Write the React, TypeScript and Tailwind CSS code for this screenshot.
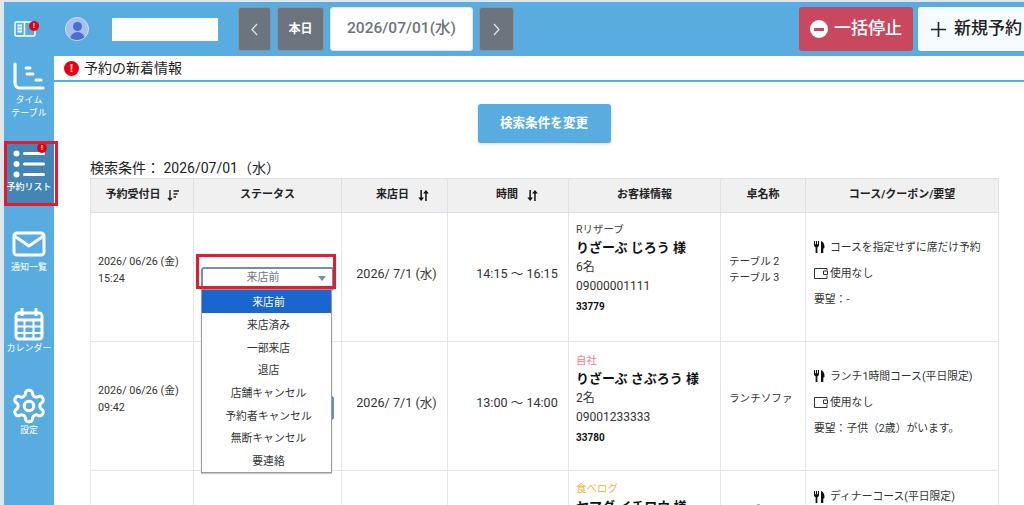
import React from "react";

const font = { fontFamily: 'Roboto, "Noto Sans CJK JP", sans-serif' };

function Badge({ className }: { className: string }) {
  return (
    <span className={"absolute flex items-center justify-center rounded-full bg-[#e60012] text-white font-bold leading-none " + className}>!</span>
  );
}

function NavItem({ label, children, className = "" }: { label: React.ReactNode; children: React.ReactNode; className?: string }) {
  return (
    <div className={"relative flex flex-col items-center text-white text-[9px] leading-[13px] " + className}>
      {children}
      <div className="text-center whitespace-nowrap">{label}</div>
    </div>
  );
}

function Fork() {
  return (
    <svg width="11" height="12" viewBox="0 0 11 12" className="shrink-0">
      <path d="M0 0v4C0 5.300 .8 6 1.600 6.300V12h1.800V6.300C4.200 6 5 5.300 5 4V0H4v3.200H3.100V0H1.900v3.200H1V0z" fill="#111" />
      <path d="M7 12V0c2 .5 3.500 2.500 3.500 6 0 1-.5 1.500-1.200 1.500V12z" fill="#111" />
    </svg>
  );
}

function Coupon() {
  return (
    <svg width="14" height="11" viewBox="0 0 14 11" className="shrink-0" fill="none" stroke="#333" strokeWidth="1">
      <path d="M13 2.500V.5H.5v10H13V7.500" />
      <path d="M13.500 3H9.500v3.500h4z" />
    </svg>
  );
}

function Arrows() {
  return (
    <svg width="11" height="11" viewBox="0 0 11 11">
      <path d="M2.400 0h1.500v7.500H6L3.150 11 .3 7.500h2.100z" fill="#111" />
      <path d="M7.200 11h1.500V3.500h2.100L7.950 0 5.100 3.500h2.100z" fill="#111" />
    </svg>
  );
}

const headCell = "border border-[#dee2e6] bg-[#f0f0f0] text-[11px] font-bold text-[#222] text-center align-middle h-[34px] p-0";
const cell = "border border-[#e4e4ee] align-middle p-0 text-[#333]";

function Customer({ source, sourceColor, name, count, tel, id, className = "" }: { source: string; sourceColor: string; name: string; count: string; tel: string; id: string; className?: string }) {
  return (
    <div className={"pl-[7px] text-[12px] leading-[19px] " + className}>
      <div className={"text-[10.500px] leading-[17px] " + sourceColor}>{source}</div>
      <div className="text-[13px] font-bold text-[#111] leading-[20px]">{name}</div>
      <div>{count}</div>
      <div>{tel}</div>
      <div className="text-[10px] font-bold text-[#111] leading-[21px]">{id}</div>
    </div>
  );
}

function Course({ course, want }: { course: string; want: string }) {
  return (
    <div className="pl-2 pb-[8px] text-[10.800px] text-[#333] flex flex-col gap-[11px] leading-[15px]">
      <div className="flex items-center gap-[5px] whitespace-nowrap"><Fork />{course}</div>
      <div className="flex items-center gap-[2px]"><Coupon />使用なし</div>
      <div>要望：{want}</div>
    </div>
  );
}

export default function App() {
  const options = ["来店済み", "一部来店", "退店", "店舗キャンセル", "予約者キャンセル", "無断キャンセル", "要連絡"];
  return (
    <div style={font} className="relative w-[1024px] h-[505px] overflow-hidden bg-[#dfe7ee] pl-[4px] pt-[2px] flex flex-col">
      <header className="h-[54px] shrink-0 bg-[#58ace0] flex items-center">
        <div className="relative w-[42px] shrink-0 flex justify-center">
          <svg width="22" height="16" viewBox="0 0 22 16" fill="none" stroke="#fff" strokeWidth="1.500" className="-ml-[1px]">
            <path d="M2.500 1h8v14h-8A1.500 1.500 0 0 1 1 13.500v-11A1.500 1.500 0 0 1 2.500 1zM10.500 1h9A1.500 1.500 0 0 1 21 2.500v11a1.500 1.500 0 0 1-1.500 1.500h-9" />
            <path d="M3.500 4.500h4.500M3.500 7.500h4.500M3.500 10.500h4.500" strokeWidth="1.800" />
          </svg>
          <Badge className="right-[7px] top-0 w-[10px] h-[10px] text-[7px]" />
        </div>
        <div className="ml-[19px] w-[24px] h-[24px] rounded-full bg-[#a8c0f0] border border-[#d0dcf4] overflow-hidden flex flex-col items-center shrink-0">
          <span className="w-[9px] h-[9px] rounded-full bg-[#4a6fd0] mt-[4px] shrink-0" />
          <span className="w-[15px] h-[9px] rounded-t-full bg-[#4a6fd0] mt-[1px] shrink-0" />
        </div>
        <div className="ml-[23px] w-[106px] h-[23px] bg-white shrink-0" />
        <button className="ml-[20px] w-[33px] h-[44px] shrink-0 rounded-[3px] bg-[#6c757d] border border-[#87939e] flex items-center justify-center">
          <svg width="9" height="13" viewBox="0 0 9 13" fill="none" stroke="#e8e8e8" strokeWidth="1.200"><path d="M7 1 2 6.500 7 12" /></svg>
        </button>
        <button className="ml-[6px] w-[47px] h-[44px] shrink-0 rounded-[3px] bg-[#6c757d] border border-[#87939e] text-white text-[12px] font-bold">本日</button>
        <div className="ml-[6px] w-[143px] h-[44px] shrink-0 rounded-[3px] bg-white border border-[#dbe6ee] text-[#6c757d] text-[15.500px] font-medium flex items-center justify-center">2026/07/01(水)</div>
        <button className="ml-[6px] w-[35px] h-[44px] shrink-0 rounded-[3px] bg-[#6c757d] border border-[#87939e] flex items-center justify-center">
          <svg width="9" height="13" viewBox="0 0 9 13" fill="none" stroke="#e8e8e8" strokeWidth="1.200"><path d="M2 1l5 5.500L2 12" /></svg>
        </button>
        <button className="ml-[285px] w-[114px] h-[44px] rounded-[3px] bg-[#c9485f] text-white text-[17px] font-medium flex items-center justify-center gap-[6px] shrink-0">
          <span className="w-[18px] h-[18px] rounded-full bg-white flex items-center justify-center"><span className="w-[10px] h-[3px] bg-[#c9485f]" /></span>
          一括停止
        </button>
        <button className="ml-[5px] w-[120px] h-[44px] rounded-l-[3px] bg-[#f6fbfe] text-[#222] text-[17px] font-medium flex items-center gap-[8px] pl-[13px] shrink-0 whitespace-nowrap">
          <svg width="15" height="15" viewBox="0 0 15 15" stroke="#222" strokeWidth="1.600"><path d="M7.500 0v15M0 7.500h15" /></svg>
          新規予約
        </button>
      </header>

      <div className="flex-1 flex min-h-0">
        <aside className="relative w-[50px] shrink-0 bg-[#58ace0] flex flex-col">
          <NavItem label={<>タイム<br />テーブル</>} className="mt-[5px] h-[80px] text-[#eaf4fb]">
            <svg width="34" height="30" viewBox="0 0 34 30" fill="none" stroke="#fff" strokeLinecap="round" className="mb-[3px]">
              <path d="M3 3v19a5 5 0 0 0 5 5h23" strokeWidth="3.200" />
              <path d="M14 7h4M15 13h6M24 19h5" strokeWidth="3" />
            </svg>
          </NavItem>
          <NavItem label={<span className="font-medium">予約リスト</span>} className="h-[64px] bg-[#4186b4] pt-[9px]">
            <svg width="32" height="29" viewBox="0 0 32 29" fill="#fff" className="mb-[2px]">
              <circle cx="3.500" cy="3.500" r="3" /><circle cx="3.500" cy="14" r="3" /><circle cx="3.500" cy="24.500" r="3" />
              <rect x="10" y="2" width="22" height="3" rx="1.500" /><rect x="10" y="12.500" width="22" height="3" rx="1.500" /><rect x="10" y="23" width="22" height="3" rx="1.500" />
            </svg>
            <Badge className="left-[33px] top-[2px] w-[10px] h-[10px] text-[7px]" />
          </NavItem>
          <NavItem label="通知一覧" className="mt-[26px]">
            <svg width="34" height="26" viewBox="0 0 34 26" fill="none" stroke="#fff" strokeWidth="3" strokeLinejoin="round" className="mb-[4px]">
              <rect x="2" y="2" width="30" height="22" rx="3" /><path d="M2.500 5 17 15 31.500 5" />
            </svg>
          </NavItem>
          <NavItem label="カレンダー" className="mt-[34px]">
            <svg width="30" height="33" viewBox="0 0 30 33" fill="none" stroke="#fff" strokeWidth="3" className="mb-[1px]">
              <rect x="2" y="5" width="26" height="26" rx="3" />
              <path d="M8 0v8M22 0v8M2 12h26" />
              <path d="M10.500 12v19M19.500 12v19M2 18.500h26M2 25h26" strokeWidth="2" />
            </svg>
          </NavItem>
          <NavItem label="設定" className="mt-[32px]">
            <svg width="38" height="38" viewBox="0 0 24 24" fill="none" stroke="#fff" strokeWidth="1.900" className="-mb-[1px]">
              <path d="M12.220 2h-.44a2 2 0 0 0-2 2v.18a2 2 0 0 1-1 1.730l-.43.250a2 2 0 0 1-2 0l-.15-.080a2 2 0 0 0-2.730.730l-.22.380a2 2 0 0 0 .73 2.730l.15.100a2 2 0 0 1 1 1.720v.510a2 2 0 0 1-1 1.740l-.15.090a2 2 0 0 0-.73 2.730l.22.380a2 2 0 0 0 2.730.730l.15-.080a2 2 0 0 1 2 0l.43.250a2 2 0 0 1 1 1.730V20a2 2 0 0 0 2 2h.44a2 2 0 0 0 2-2v-.180a2 2 0 0 1 1-1.730l.43-.250a2 2 0 0 1 2 0l.15.080a2 2 0 0 0 2.730-.730l.22-.390a2 2 0 0 0-.73-2.730l-.15-.080a2 2 0 0 1-1-1.740v-.500a2 2 0 0 1 1-1.740l.15-.090a2 2 0 0 0 .73-2.730l-.22-.380a2 2 0 0 0-2.730-.730l-.15.080a2 2 0 0 1-2 0l-.43-.250a2 2 0 0 1-1-1.730V4a2 2 0 0 0-2-2z" />
              <circle cx="12" cy="12" r="3" />
            </svg>
          </NavItem>
        </aside>

        <main className="flex-1 min-w-0 bg-white">
          <div className="h-[26px] border-b-2 border-[#58ace0] flex items-center pl-[10px] gap-[5px] text-[14px] text-[#222]">
            <span className="w-[15px] h-[15px] rounded-full bg-[#e60012] text-white text-[11px] font-bold flex items-center justify-center leading-none">!</span>
            予約の新着情報
          </div>
          <div className="flex justify-center pt-[22px] pl-[10px]">
            <button className="w-[133px] h-[39px] rounded-[3px] bg-[#58ace0] text-white text-[12.600px] font-bold shadow-[0_1px_3px_rgba(0,0,0,0.15)]">検索条件を変更</button>
          </div>
          <div className="ml-[36px] mt-[16px] text-[14px] leading-[19px] text-[#222]">検索条件： 2026/07/01（水）</div>
          <table className="ml-[36px] w-[908px] table-fixed border-collapse">
            <colgroup>
              <col className="w-[103px]" /><col className="w-[148px]" /><col className="w-[106px]" /><col className="w-[121px]" /><col className="w-[152px]" /><col className="w-[85px]" /><col className="w-[193px]" />
            </colgroup>
            <thead>
              <tr>
                <th className={headCell}>
                  <span className="inline-flex items-center gap-[6px]">予約受付日
                    <svg width="12" height="11" viewBox="0 0 12 11" fill="none" stroke="#222" strokeWidth="1.400"><path d="M3 0v10M1 8l2 2 2-2M6.500 1H12M6.500 4H10.500M6.500 7H9" /></svg>
                  </span>
                </th>
                <th className={headCell}>ステータス</th>
                <th className={headCell}><span className="inline-flex items-center gap-[9px] pl-[16px]">来店日<Arrows /></span></th>
                <th className={headCell}><span className="inline-flex items-center gap-[9px] pl-[18px]">時間<Arrows /></span></th>
                <th className={headCell}>お客様情報</th>
                <th className={headCell}>卓名称</th>
                <th className={headCell}>コース/クーポン/要望</th>
              </tr>
            </thead>
            <tbody>
              <tr className="h-[129px]">
                <td className={cell}><div className="pl-[7px] pb-[14px] text-[10.750px] leading-[17px] whitespace-nowrap">2026/ 06/26 (金)<br />15:24</div></td>
                <td className={cell}>
                  <div className="mx-[7px] h-[24px] mt-[3px] rounded-[3px] border-2 border-[#6f92ab] text-[#6c757d] text-[11px] flex items-center justify-center pr-[9px] relative">
                    来店前
                    <span className="absolute right-[6px] top-[7px] border-x-[4px] border-x-transparent border-t-[5px] border-t-[#6f92ab]" />
                  </div>
                </td>
                <td className={cell}><div className="text-center text-[12.600px] pb-[6px] pl-[4px]">2026/ 7/1 (水)</div></td>
                <td className={cell}><div className="text-center text-[12.600px] pb-[6px] pl-[18px]">14:15 ～ 16:15</div></td>
                <td className={cell}><Customer className="pb-[16px]" source="Rリザーブ" sourceColor="text-[#444]" name="りざーぶ じろう 様" count="6名" tel="09000001111" id="33779" /></td>
                <td className={cell}><div className="pl-2 pb-[15px] text-[10.600px] leading-[16px]">テーブル 2<br />テーブル 3</div></td>
                <td className={cell}><Course course="コースを指定せずに席だけ予約" want="-" /></td>
              </tr>
              <tr className="h-[129px]">
                <td className={cell}><div className="pl-[7px] pb-[14px] text-[10.750px] leading-[17px] whitespace-nowrap">2026/ 06/26 (金)<br />09:42</div></td>
                <td className={cell}>
                  <div className="mx-[7px] h-[24px] mt-[3px] rounded-[3px] border-2 border-[#6f92ab]" />
                </td>
                <td className={cell}><div className="text-center text-[12.600px] pb-[6px] pl-[4px]">2026/ 7/1 (水)</div></td>
                <td className={cell}><div className="text-center text-[12.600px] pb-[6px] pl-[18px]">13:00 ～ 14:00</div></td>
                <td className={cell}><Customer className="pb-[12px]" source="自社" sourceColor="text-[#ff7b85]" name="りざーぶ さぶろう 様" count="2名" tel="09001233333" id="33780" /></td>
                <td className={cell}><div className="pl-2 pb-[15px] text-[10.600px]">ランチソファ</div></td>
                <td className={cell}><Course course="ランチ1時間コース(平日限定)" want="子供（2歳）がいます。" /></td>
              </tr>
              <tr className="h-[129px]">
                <td className={cell} />
                <td className={cell} />
                <td className={cell} />
                <td className={cell} />
                <td className={cell + " !align-top"}>
                  <div className="pt-[9px]"><Customer source="食べログ" sourceColor="text-[#f5b041]" name="ヤマダ イチロウ 様" count="" tel="" id="" /></div>
                </td>
                <td className={cell + " !align-top"}>
                  <div className="pt-[31px] pl-2 text-[10.600px] leading-[16px]">テーブル 1</div>
                </td>
                <td className={cell + " !align-top"}>
                  <div className="pt-[18px] pl-2 text-[10.800px] flex items-center gap-[5px] leading-[15px]"><Fork />ディナーコース(平日限定)</div>
                </td>
              </tr>
            </tbody>
          </table>
        </main>
      </div>

      {/* open status dropdown */}
      <div className="absolute left-[201px] top-[289px] w-[131px] h-[184px] bg-white border border-[#9a9a9a] shadow-[0_1px_1px_rgba(0,0,0,0.2)] text-[10.800px] text-[#333] text-center">
        <div className="h-[23px] bg-[#1a66cf] text-white leading-[25px] pl-[4px]">来店前</div>
        <div className="pl-[4px] pt-[1px]">
          {options.map((o) => (
            <div key={o} className="h-[22.700px] leading-[24px]">{o}</div>
          ))}
        </div>
      </div>

      {/* red annotation boxes */}
      <div className="absolute left-[196px] top-[254px] w-[140px] h-[35px] border-[3px] border-[#e8192c]" />
      <div className="absolute left-[4px] top-[141px] w-[54px] h-[65px] border-[3px] border-[#e8192c]" />
    </div>
  );
}
